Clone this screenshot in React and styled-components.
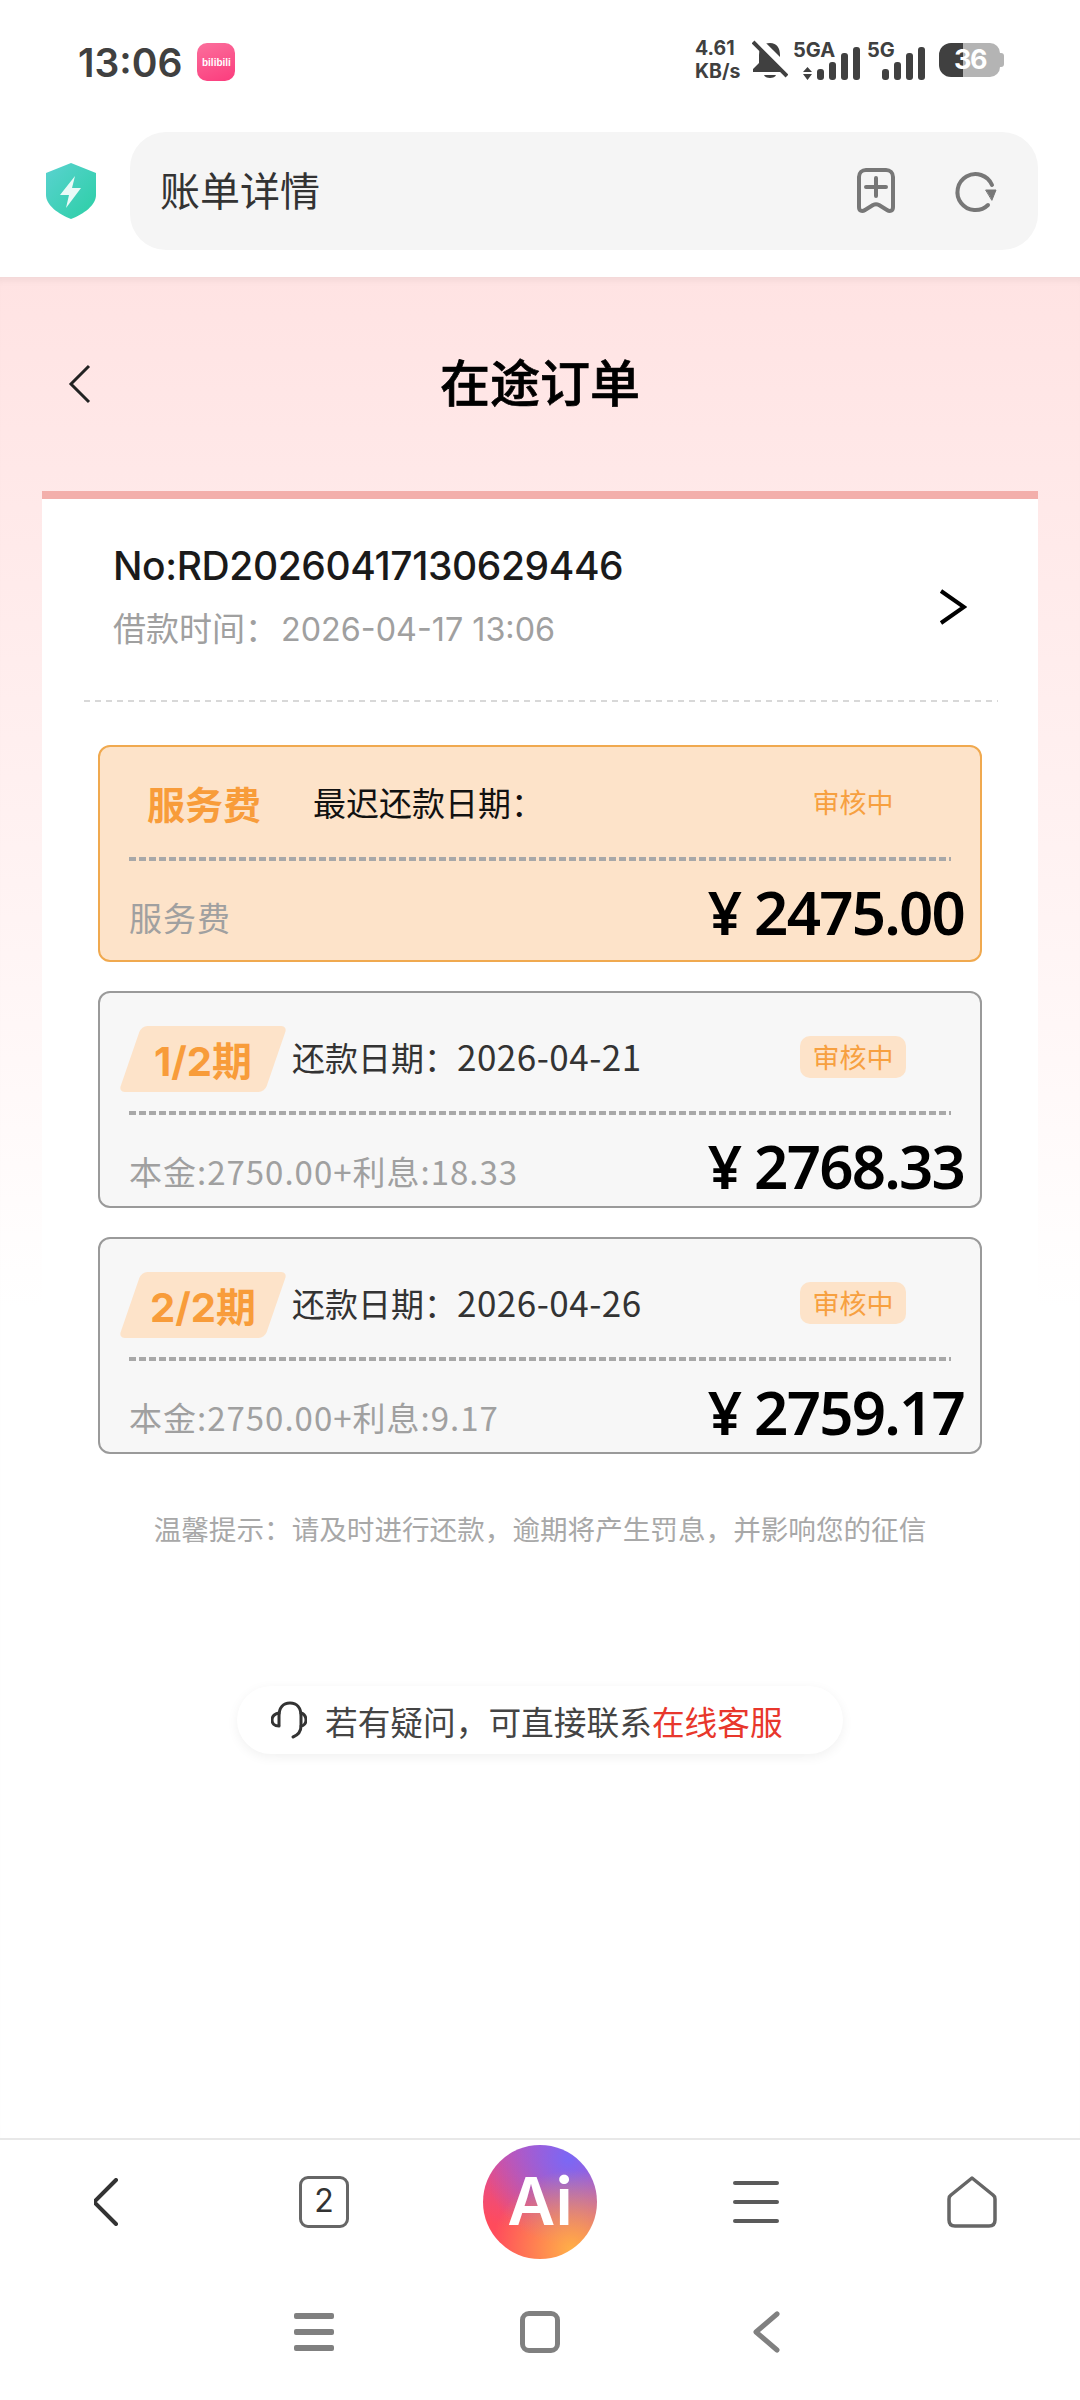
import React from "react";
import styled, { createGlobalStyle } from "styled-components";

const CJK = `"Noto Sans CJK SC", "Noto Sans", sans-serif`;

const GlobalStyle = createGlobalStyle`
  html, body { margin: 0; padding: 0; background: #fff; }
  * { box-sizing: border-box; }
  body { font-family: ${CJK}; }
`;

const bills = [
  { tag: "1/2期", date: "2026-04-21", detail: "本金:2750.00+利息:18.33", amount: "2768.33" },
  { tag: "2/2期", date: "2026-04-26", detail: "本金:2750.00+利息:9.17", amount: "2759.17" },
];

const Signal = ({ label, arrows, width }) => (
  <SignalIcon width={width} height="46" viewBox={`0 -6 ${width} 46`}>
    <text x="0" y="17" fontFamily="Inter, sans-serif" fontWeight="700" fontSize="20" fill="#404040">{label}</text>
    {arrows && <path d="M14.500 27l4.500 5h-9zM14.500 40l4.500-6h-9z" fill="#404040" />}
    <rect x={width - 43} y="29" width="7" height="11" rx="3" fill="#404040" />
    <rect x={width - 31} y="22" width="7" height="18" rx="3" fill="#404040" />
    <rect x={width - 19} y="13" width="7" height="27" rx="3" fill="#404040" />
    <rect x={width - 7} y="7" width="7" height="33" rx="3" fill="#404040" />
  </SignalIcon>
);

const App = () => (
  <Page>
    <GlobalStyle />
    <StatusBar>
      <StatusLeft>
        <Clock>13:06</Clock>
        <AppBadge>bilibili</AppBadge>
      </StatusLeft>
      <StatusRight>
        <Speed>4.61<br />KB/s</Speed>
        <BellIcon width="36" height="40" viewBox="0 0 36 40">
          <path d="M18 3c-7 0-11 5-11 12v8l-6 6v3h33v-3l-6-6v-8c0-7-3-12-10-12z" fill="#404040" />
          <path d="M12 35h12c-1 4-11 4-12 0z" fill="#404040" />
          <path d="M5 -1l34 34" stroke="#fff" strokeWidth="7" />
          <path d="M1 2l34 34" stroke="#404040" strokeWidth="4" />
        </BellIcon>
        <Signal label="5GA" arrows width={67} />
        <Signal label="5G" width={58} />
        <Battery>
          <BatteryText>36</BatteryText>
        </Battery>
      </StatusRight>
    </StatusBar>

    <AddressRow>
      <svg width="50" height="56" viewBox="0 0 50 56">
        <defs>
          <linearGradient id="shield" x1="0" y1="0" x2="1" y2="1">
            <stop offset="0" stopColor="#5ad2d0" />
            <stop offset="1" stopColor="#2bcfa5" />
          </linearGradient>
        </defs>
        <path d="M25 0l25 10v22c0 10-12 19-25 24C12 51 0 42 0 32V10z" fill="url(#shield)" />
        <path d="M29 13L14 32h9l-3 13 15-20h-9z" fill="#eafaf7" />
      </svg>
      <AddressBar>
        <AddressText>账单详情</AddressText>
        <AddressIcons>
          <svg width="40" height="46" viewBox="0 0 40 46" fill="none" stroke="#777" strokeWidth="4" strokeLinejoin="round" strokeLinecap="round">
            <path d="M3 9c0-4 3-7 7-7h20c4 0 7 3 7 7v30c0 4-3 5-6 3l-8-5c-2-1-4-1-6 0l-8 5c-3 2-6 1-6-3z" />
            <path d="M20 10v18M10 19h20" />
          </svg>
          <svg width="44" height="44" viewBox="0 0 44 44" fill="none" stroke="#777" strokeWidth="4" strokeLinecap="round">
            <path d="M34 36A18 18 0 1 1 38 16" />
            <path d="M32 21h10l-4 10z" fill="#777" stroke="#777" strokeWidth="1" strokeLinejoin="round" />
          </svg>
        </AddressIcons>
      </AddressBar>
    </AddressRow>

    <Main>
      <TitleRow>
        <BackLink>
          <svg width="24" height="40" viewBox="0 0 24 40" fill="none" stroke="#222" strokeWidth="3">
            <path d="M21 2L3 20l18 18" />
          </svg>
        </BackLink>
        <PageTitle>在途订单</PageTitle>
      </TitleRow>

      <Card>
        <OrderHead>
          <div>
            <OrderNo>No:RD20260417130629446</OrderNo>
            <OrderTime>借款时间：<span>2026-04-17 13:06</span></OrderTime>
          </div>
          <svg width="28" height="36" viewBox="0 0 28 36" fill="none" stroke="#000" strokeWidth="4">
            <path d="M2 2l23 16L2 34" />
          </svg>
        </OrderHead>
        <OrderDivider />
        <BillList>
          <Bill $fee>
            <BillTop $fee>
              <FeeTag>服务费</FeeTag>
              <BillDate $fee>最迟还款日期：</BillDate>
              <Status $fee>审核中</Status>
            </BillTop>
            <BillDivider />
            <BillBottom>
              <BillDetail>服务费</BillDetail>
              <Amount>¥ 2475.00</Amount>
            </BillBottom>
          </Bill>
          {bills.map((bill) => (
            <Bill key={bill.tag}>
              <BillTop>
                <PeriodTag><span>{bill.tag}</span></PeriodTag>
                <BillDate>还款日期：<span>{bill.date}</span></BillDate>
                <Status>审核中</Status>
              </BillTop>
              <BillDivider />
              <BillBottom>
                <BillDetail>{bill.detail}</BillDetail>
                <Amount>¥ {bill.amount}</Amount>
              </BillBottom>
            </Bill>
          ))}
        </BillList>
      </Card>

      <Hint>温馨提示：请及时进行还款，逾期将产生罚息，并影响您的征信</Hint>

      <ServiceWrap>
        <ServicePill>
          <svg width="36" height="38" viewBox="0 0 36 38" fill="none" stroke="#333" strokeWidth="3" strokeLinecap="round">
            <path d="M8 24V15C8 7 12 2 19 2s11 5 11 13v10c0 6-3 9-8 11" />
            <path d="M8 12C3 13 1 16 1 19s2 6 7 6" />
            <path d="M30 12c3 1 5 4 5 7s-2 6-5 6" />
          </svg>
          <ServiceText>若有疑问，可直接联系<em>在线客服</em></ServiceText>
        </ServicePill>
      </ServiceWrap>
    </Main>

    <BrowserNav>
      <NavCell>
        <svg width="28" height="48" viewBox="3 0 28 48" fill="none" stroke="#333" strokeWidth="4" strokeLinecap="round" strokeLinejoin="round">
          <path d="M25 2L3 24l22 22" />
        </svg>
      </NavCell>
      <NavCell>
        <TabCount>2</TabCount>
      </NavCell>
      <NavCell>
        <AiButton>Ai</AiButton>
      </NavCell>
      <NavCell>
        <MenuLines $width={46} $gap={15} $thick={4} $color="#5a5a5a"><i /><i /><i /></MenuLines>
      </NavCell>
      <NavCell>
        <svg width="50" height="52" viewBox="0 0 50 52" fill="none" stroke="#666" strokeWidth="3.5" strokeLinejoin="round">
          <path d="M25 2L4 19c-1.500 1-2 2-2 4v21c0 4 2 6 6 6h34c4 0 6-2 6-6V23c0-2-.5-3-2-4z" />
        </svg>
      </NavCell>
    </BrowserNav>

    <GestureNav>
      <NavCell>
        <MenuLines $width={40} $gap={10} $thick={6} $color="#808080"><i /><i /><i /></MenuLines>
      </NavCell>
      <NavCell>
        <HomeSquare />
      </NavCell>
      <NavCell>
        <svg width="28" height="42" viewBox="0 0 28 42" fill="none" stroke="#808080" strokeWidth="5" strokeLinecap="round" strokeLinejoin="round">
          <path d="M25 3L4 21l21 18" />
        </svg>
      </NavCell>
    </GestureNav>
  </Page>
);

const Page = styled.div`
  width: 1080px;
  height: 2400px;
  display: flex;
  flex-direction: column;
  overflow: hidden;
  background: #fff;
`;

const StatusBar = styled.div`
  height: 120px;
  flex: none;
  padding: 38px 76px 0 78px;
  display: flex;
  justify-content: space-between;
  align-items: flex-start;
`;

const StatusLeft = styled.div`
  display: flex;
  align-items: center;
  gap: 15px;
  height: 48px;
`;

const Clock = styled.div`
  font-family: Inter, sans-serif;
  font-weight: 600;
  font-size: 39px;
  color: #404040;
`;

const AppBadge = styled.div`
  width: 38px;
  height: 38px;
  border-radius: 10px;
  background: linear-gradient(160deg, #fb6f9c, #fb3c7d);
  color: #fff;
  font-family: "Liberation Sans", sans-serif;
  font-size: 10px;
  font-weight: 700;
  line-height: 40px;
  text-align: center;
  overflow: hidden;
`;

const StatusRight = styled.div`
  display: flex;
  align-items: center;
  height: 46px;
  margin-top: -1px;
`;

const Speed = styled.div`
  width: 57px;
  font-family: Inter, sans-serif;
  font-weight: 700;
  font-size: 19.500px;
  line-height: 23px;
  color: #404040;
  white-space: nowrap;
`;

const BellIcon = styled.svg`
  margin-right: 5px;
  overflow: hidden;
`;

const SignalIcon = styled.svg`
  margin-top: -6px;
  & + & { margin-left: 7px; }
`;

const Battery = styled.div`
  position: relative;
  width: 61px;
  height: 34px;
  margin: 0 4px 0 14px;
  border-radius: 12px 10px 10px 12px;
  background: linear-gradient(90deg, #404040 24px, #b4b4b4 24px);
  &::after {
    content: "";
    position: absolute;
    right: -4px;
    top: 10px;
    width: 4px;
    height: 14px;
    border-radius: 0 3px 3px 0;
    background: #b4b4b4;
  }
`;

const BatteryText = styled.div`
  position: absolute;
  top: 0;
  left: 15px;
  font-family: Inter, sans-serif;
  font-weight: 700;
  font-size: 27px;
  line-height: 34px;
  letter-spacing: -1.500px;
  color: #fff;
`;

const AddressRow = styled.div`
  height: 157px;
  flex: none;
  padding: 12px 42px 0 46px;
  display: flex;
  align-items: flex-start;
  gap: 34px;
  > svg { margin-top: 31px; }
`;

const AddressBar = styled.div`
  flex: 1;
  height: 118px;
  padding: 0 40px 0 30px;
  border-radius: 36px;
  background: #f5f5f5;
  display: flex;
  align-items: center;
  justify-content: space-between;
`;

const AddressText = styled.div`
  margin-bottom: 4px;
  font-size: 40px;
  color: #333;
`;

const AddressIcons = styled.div`
  display: flex;
  align-items: center;
  gap: 58px;
`;

const Main = styled.main`
  flex: 1;
  padding: 0 42px;
  background: linear-gradient(#ffe3e3 0, #fff0f0 500px, #fff 1030px);
  box-shadow: inset 0 8px 8px -6px rgba(0, 0, 0, 0.07);
`;

const TitleRow = styled.div`
  position: relative;
  height: 214px;
  padding-bottom: 8px;
  display: flex;
  align-items: center;
  justify-content: center;
`;

const BackLink = styled.div`
  position: absolute;
  left: 26px;
  top: 87px;
  line-height: 0;
`;

const PageTitle = styled.h1`
  margin: 0;
  font-size: 50px;
  font-weight: 500;
  -webkit-text-stroke: 0.7px #000;
  color: #000;
`;

const Card = styled.section`
  background: #fff;
  border-top: 8px solid #f3afab;
`;

const OrderHead = styled.div`
  height: 201px;
  padding: 40px 71px 0 71px;
  display: flex;
  justify-content: space-between;
  align-items: center;
  > div { align-self: flex-start; }
  > svg { margin-top: -25px; }
`;

const OrderNo = styled.div`
  font-family: Inter, sans-serif;
  font-weight: 500;
  font-size: 39px;
  line-height: 54px;
  color: #1a1a1a;
  letter-spacing: -0.4px;
`;

const OrderTime = styled.div`
  margin-top: 10px;
  font-size: 33px;
  line-height: 48px;
  color: #a0a0a0;
  white-space: nowrap;
  span { font-family: Inter, sans-serif; font-size: 32.300px; margin-left: 3px; }
`;

const OrderDivider = styled.div`
  height: 2px;
  margin: 0 40px 0 42px;
  background: repeating-linear-gradient(90deg, #d8d8d8 0 6px, transparent 6px 11px);
`;

const BillList = styled.div`
  margin: 43px 56px 0;
  display: flex;
  flex-direction: column;
  gap: 29px;
`;

const Bill = styled.article`
  height: 217px;
  padding: 0 15px 0 29px;
  border: 2px solid ${(p) => (p.$fee ? "#f0a94f" : "#9a9a9a")};
  border-radius: 12px;
  background: ${(p) => (p.$fee ? "#fde3c9" : "#f7f7f7")};
`;

const BillTop = styled.div`
  height: ${(p) => (p.$fee ? 110 : 118)}px;
  display: flex;
  align-items: center;
`;

const FeeTag = styled.div`
  width: 184px;
  padding-left: 18px;
  font-size: 38px;
  font-weight: 700;
  color: #f89c3a;
`;

const PeriodTag = styled.div`
  position: relative;
  width: 146px;
  height: 66px;
  margin: 13px 16px 0 1px;
  flex: none;
  display: flex;
  align-items: center;
  justify-content: center;
  font-family: Inter, ${CJK};
  font-size: 40px;
  font-weight: 700;
  color: #f89c3a;
  white-space: nowrap;
  &::before {
    content: "";
    position: absolute;
    inset: 0;
    background: #fde3c9;
    border-radius: 6px;
    transform: skewX(-19deg);
  }
  span { position: relative; }
`;

const BillDate = styled.div`
  flex: 1;
  margin-top: ${(p) => (p.$fee ? 0 : 7)}px;
  font-size: 33px;
  color: ${(p) => (p.$fee ? "#111" : "#333")};
  white-space: nowrap;
  span { font-size: 35px; letter-spacing: 0.5px; }
`;

const Status = styled.div`
  width: 106px;
  height: 42px;
  margin: ${(p) => (p.$fee ? 0 : 9)}px 59px 0 0;
  border-radius: 10px;
  background: ${(p) => (p.$fee ? "transparent" : "#fde3c9")};
  color: #f7a040;
  font-size: 27px;
  line-height: 42px;
  text-align: center;
`;

const BillDivider = styled.div`
  height: 4px;
  margin-right: 14px;
  background: repeating-linear-gradient(90deg, #a8a8a8 0 7px, transparent 7px 10px);
`;

const BillBottom = styled.div`
  height: 90px;
  display: flex;
  align-items: center;
  justify-content: space-between;
`;

const BillDetail = styled.div`
  margin-top: 22px;
  font-size: 33px;
  letter-spacing: 1px;
  color: #a0a0a0;
  white-space: nowrap;
`;

const Amount = styled.div`
  margin-top: 12px;
  margin-right: 1px;
  font-family: "Noto Sans", sans-serif;
  font-size: 60px;
  font-weight: 600;
  color: #000;
  line-height: 76px;
  letter-spacing: -1.800px;
`;

const Hint = styled.p`
  margin: 54px 0 0;
  font-size: 27.600px;
  line-height: 40px;
  color: #a8a8a8;
  text-align: center;
  white-space: nowrap;
`;

const ServiceWrap = styled.div`
  margin-top: 138px;
  display: flex;
  justify-content: center;
`;

const ServicePill = styled.div`
  width: 606px;
  height: 68px;
  padding-left: 34px;
  border-radius: 34px;
  background: #fff;
  box-shadow: 0 3px 12px rgba(0, 0, 0, 0.06);
  display: flex;
  align-items: center;
  gap: 18px;
`;

const ServiceText = styled.div`
  font-size: 32.700px;
  color: #444;
  white-space: nowrap;
  em { font-style: normal; color: #e8372c; }
`;

const BrowserNav = styled.nav`
  height: 126px;
  flex: none;
  border-top: 2px solid #e8e8e8;
  display: grid;
  grid-template-columns: repeat(5, 1fr);
`;

const NavCell = styled.div`
  display: flex;
  align-items: center;
  justify-content: center;
`;

const TabCount = styled.div`
  width: 50px;
  height: 52px;
  border: 3.500px solid #666;
  border-radius: 9px;
  color: #333;
  font-family: Inter, sans-serif;
  font-size: 32px;
  line-height: 44px;
  text-align: center;
`;

const AiButton = styled.div`
  width: 114px;
  height: 114px;
  border-radius: 50%;
  background:
    radial-gradient(circle at 78% 92%, #ffb048 0, rgba(255, 176, 72, 0) 58%),
    radial-gradient(circle at 75% 12%, #7a68f5 0, rgba(122, 104, 245, 0) 65%),
    linear-gradient(200deg, #c050c8 0, #ff4b5c 75%);
  color: #fff;
  font-family: Inter, sans-serif;
  font-size: 66px;
  font-weight: 600;
  line-height: 112px;
  text-align: center;
`;

const MenuLines = styled.div`
  width: ${(p) => p.$width}px;
  display: flex;
  flex-direction: column;
  gap: ${(p) => p.$gap}px;
  i {
    display: block;
    height: ${(p) => p.$thick}px;
    border-radius: 2px;
    background: ${(p) => p.$color};
  }
`;

const GestureNav = styled.div`
  flex: none;
  height: 136px;
  padding: 0 201px;
  display: grid;
  grid-template-columns: repeat(3, 1fr);
`;

const HomeSquare = styled.div`
  width: 40px;
  height: 42px;
  border: 5px solid #808080;
  border-radius: 9px;
`;

export default App;
